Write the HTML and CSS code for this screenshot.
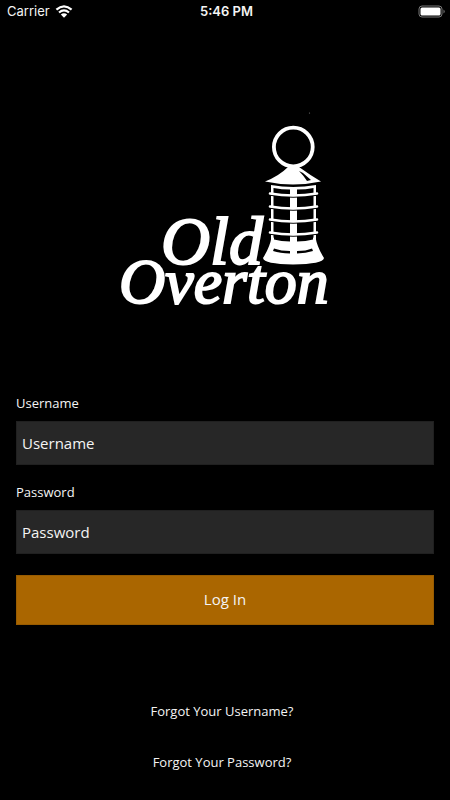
FILE: index.html
```html
<!DOCTYPE html>
<html lang="en">
<head>
<meta charset="utf-8">
<meta name="viewport" content="width=device-width, initial-scale=1">
<title>Old Overton</title>
<link rel="stylesheet" href="styles.css">
</head>
<body>
<header class="status">
  <div class="carrier">
    <span>Carrier</span>
    <svg class="wifi" viewBox="0 0 18 13" aria-hidden="true">
      <path d="M1.4 4.6Q9-2 16.6 4.6M4 7.5Q9 3.2 14 7.5" fill="none" stroke="#fff" stroke-width="2.2"/>
      <path d="M5.8 9.5Q9 6.8 12.2 9.5L9 12.8Z" fill="#fff"/>
    </svg>
  </div>
  <span class="time">5:46 PM</span>
  <svg class="battery" viewBox="0 0 28 13" aria-hidden="true">
    <rect x="1" y="1" width="23" height="11" rx="3" fill="none" stroke="#777"/>
    <rect x="2.5" y="2.5" width="20" height="8" rx="1.5" fill="#fff"/>
    <path d="M25.5 4.5Q28 6.5 25.5 8.5Z" fill="#777"/>
  </svg>
</header>
<main>
  <svg class="logo" viewBox="110 100 230 230" role="img" aria-label="Old Overton">
    <circle cx="309.5" cy="113" r=".6" fill="#777"/>
    <circle cx="293.3" cy="147" r="19.4" fill="none" stroke="#fff" stroke-width="3.8"/>
    <path d="M288 167H299Q310 175 321 181.500Q293 187.500 265 181.500Q279 176 288 167Z" fill="#fff"/>
    <path d="M299 171L303 173L311 180L307 181Q304 176 299 171Z" fill="#000"/>
    <path d="M271 185Q293 189 316 185V245H271Z" fill="#fff"/>
    <path d="M273.500 188Q282 189.500 290 189.500V241Q281 241 273.500 239ZM297 189.500Q306 189.500 313.500 188V239Q306 241 297 241Z" fill="#000"/>
    <path d="M271.500 237Q293 245 315.500 237Q317 247 324 258Q323 264 293 264.500Q264 264 263 258Q270 247 271.500 237Z" fill="#fff"/>
    <path d="M274 234H290V241.500Q281 241.500 274 239.500ZM297 234H313V239.500Q306 241.500 297 241.500Z" fill="#000"/>
    <path d="M274 248.500Q281 251 290 251V253.500Q280 253 273 251ZM297 251Q306 251 312 248.500L313 251Q306 253 297 253.500Z" fill="#000"/>
    <g fill="none" stroke-linecap="round">
      <path d="M270 195Q293 199 317 195M270 208Q293 212 317 208M270 221Q293 225 317 221M270 234Q293 238 317 234" stroke="#000" stroke-width="1.6"/>
      <path d="M270 193.500Q293 197.500 317 193.500M270 206.500Q293 210.500 317 206.500M270 219.500Q293 223.500 317 219.500M270 232.500Q293 236.500 317 232.500" stroke="#fff" stroke-width="2.6"/>
    </g>
    <text class="wordmark first" x="161" y="264">Old</text>
    <text class="wordmark" x="119" y="303">Overton</text>
  </svg>
  <form class="login">
    <label for="username">Username</label>
    <input id="username" type="text" placeholder="Username">
    <label for="password">Password</label>
    <input id="password" type="password" placeholder="Password">
    <button type="button">Log In</button>
  </form>
  <nav class="help">
    <a href="#username">Forgot Your Username?</a>
    <a href="#password">Forgot Your Password?</a>
  </nav>
</main>
</body>
</html>
```
FILE: styles.css
```css
* {
  box-sizing: border-box;
}

body {
  margin: 0;
  background: #000;
  color: #f4f4f4;
  font: 13px/18px "Open Sans", sans-serif;
}

.status {
  display: grid;
  grid-template-columns: 1fr auto 1fr;
  align-items: center;
  height: 22px;
  padding: 0 4px 0 7px;
  font-family: Inter, sans-serif;
}

.carrier {
  display: flex;
  align-items: center;
  gap: 5px;
}

.wifi {
  width: 18px;
  height: 13px;
}

.time {
  font-weight: 600;
}

.battery {
  justify-self: end;
  width: 28px;
  height: 13px;
}

.logo {
  display: block;
  width: 230px;
  height: 230px;
  margin: 78px auto 64px;
}

.wordmark {
  font: italic 64px "Liberation Serif", serif;
  fill: #fff;
  stroke: #fff;
  stroke-width: 2px;
}

.wordmark.first {
  font-size: 68px;
}

.login {
  display: flex;
  flex-direction: column;
  padding: 0 16px;
}

.login label {
  margin-bottom: 9px;
}

.login input {
  width: 100%;
  height: 44px;
  margin: 0 0 18px;
  padding: 0 5px 1px;
  border: 1px solid #202020;
  border-radius: 0;
  background: #272727;
  color: #f4f4f4;
  font: 15px "Open Sans", sans-serif;
}

.login input::placeholder {
  color: #f4f4f4;
  opacity: 1;
}

.login button {
  height: 50px;
  margin-top: 3px;
  padding: 0 0 2px;
  border: 1px solid #985b00;
  background: #aa6600;
  color: #f4f4f4;
  font: 15px "Open Sans", sans-serif;
}

.help {
  display: flex;
  flex-direction: column;
  align-items: center;
  gap: 33px;
  padding: 77px 22px 28px 16px;
}

.help a {
  color: inherit;
  text-decoration: none;
}
```
